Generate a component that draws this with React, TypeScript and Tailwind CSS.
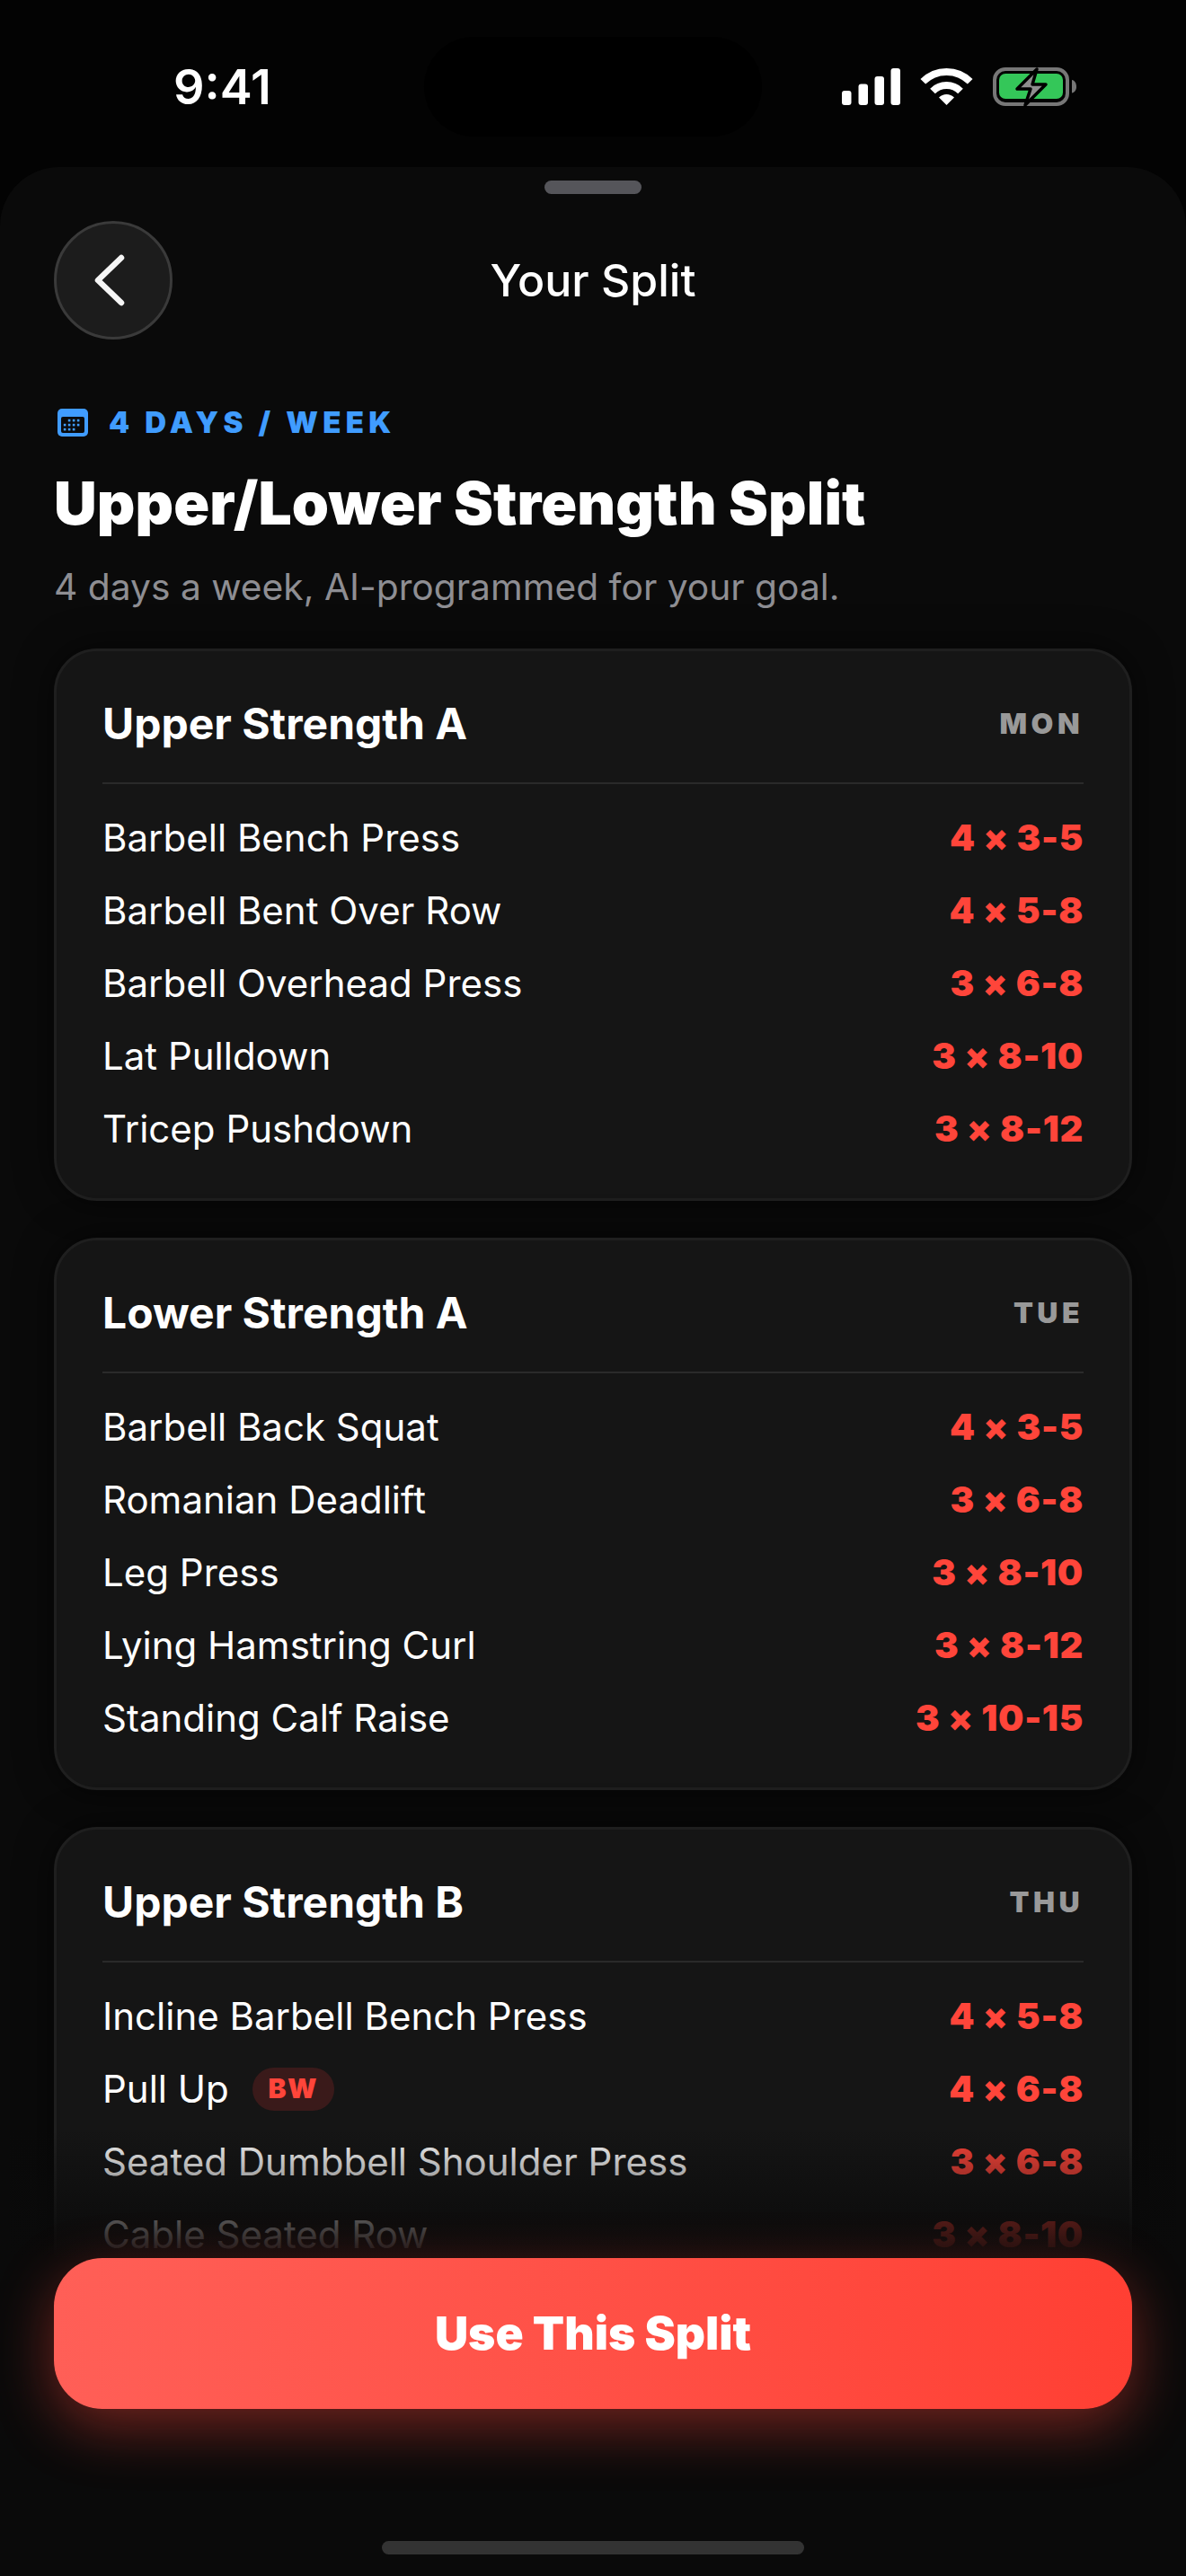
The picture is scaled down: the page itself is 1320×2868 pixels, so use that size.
type Exercise = { name: string; sets: string; tag?: string };
type Day = { title: string; day: string; exercises: Exercise[] };

const DAYS: Day[] = [
  {
    title: "Upper Strength A",
    day: "MON",
    exercises: [
      { name: "Barbell Bench Press", sets: "4 × 3-5" },
      { name: "Barbell Bent Over Row", sets: "4 × 5-8" },
      { name: "Barbell Overhead Press", sets: "3 × 6-8" },
      { name: "Lat Pulldown", sets: "3 × 8-10" },
      { name: "Tricep Pushdown", sets: "3 × 8-12" },
    ],
  },
  {
    title: "Lower Strength A",
    day: "TUE",
    exercises: [
      { name: "Barbell Back Squat", sets: "4 × 3-5" },
      { name: "Romanian Deadlift", sets: "3 × 6-8" },
      { name: "Leg Press", sets: "3 × 8-10" },
      { name: "Lying Hamstring Curl", sets: "3 × 8-12" },
      { name: "Standing Calf Raise", sets: "3 × 10-15" },
    ],
  },
  {
    title: "Upper Strength B",
    day: "THU",
    exercises: [
      { name: "Incline Barbell Bench Press", sets: "4 × 5-8" },
      { name: "Pull Up", sets: "4 × 6-8", tag: "BW" },
      { name: "Seated Dumbbell Shoulder Press", sets: "3 × 6-8" },
      { name: "Cable Seated Row", sets: "3 × 8-10" },
      { name: "Lateral Raise", sets: "3 × 12-15" },
    ],
  },
];

function StatusIcons() {
  return (
    <svg width="264" height="46" viewBox="0 0 264 46" fill="none">
      <rect x="1" y="26" width="10.5" height="16" rx="3" fill="#fff" />
      <rect x="19.5" y="18.5" width="10.5" height="23.5" rx="3" fill="#fff" />
      <rect x="37.5" y="10" width="10.5" height="32" rx="3" fill="#fff" />
      <rect x="55.5" y="1" width="10.5" height="41" rx="3" fill="#fff" />
      <path d="M91.3 15.8A37 37 0 0 1 143.700 15.800" stroke="#fff" strokeWidth="8" />
      <path d="M102 26.500A22 22 0 0 1 133 26.500" stroke="#fff" strokeWidth="8" />
      <path d="M117.500 42L109 33.500A12 12 0 0 1 126 33.500Z" fill="#fff" />
      <rect x="171" y="2" width="81" height="39" rx="12" stroke="#777" strokeWidth="4" />
      <rect x="176" y="7" width="71" height="28" rx="7" fill="#34c759" />
      <path d="M257 14c3 .5 5 3.500 5 7.500s-2 6.500-5 7z" fill="#777" />
      <path
        d="M218 2L196 24h15l-6 18L228 19h-15z"
        fill="#8e8e8e"
        stroke="#000"
        strokeWidth="3.500"
        strokeLinejoin="round"
      />
    </svg>
  );
}

function CalendarIcon() {
  return (
    <svg width="34" height="31" viewBox="0 0 34 31">
      <rect width="34" height="31" rx="5" fill="#409cff" />
      <rect x="4" y="9" width="26" height="18" rx="2" fill="#0a0a0a" />
      {[
        [13, 13],
        [18, 13],
        [23, 13],
        [8, 18],
        [13, 18],
        [18, 18],
        [23, 18],
        [8, 23],
        [13, 23],
        [18, 23],
      ].map(([x, y]) => (
        <rect key={`${x}-${y}`} x={x - 1.2} y={y - 1.2} width="2.600" height="2.600" fill="#409cff" />
      ))}
    </svg>
  );
}

function DayCard({ day }: { day: Day }) {
  return (
    <div className="shrink-0 rounded-[48px] border-[3px] border-[#1f1f1f] bg-[#151515] px-[51px] shadow-[0_0_40px_rgba(0,0,0,0.6)]">
      <div className="flex h-[148px] items-center justify-between border-b-2 border-[#2a2a2a] pt-[15px]">
        <span className="text-[48px] font-bold leading-none text-white">{day.title}</span>
        <span className="text-[32px] font-black leading-none tracking-[0.14em] text-[#999]">{day.day}</span>
      </div>
      <div className="flex flex-col pb-[37px] pt-[19px]">
        {day.exercises.map((ex) => (
          <div key={ex.name} className="flex h-[81px] items-center justify-between">
            <div className="flex items-center gap-[26px]">
              <span className="text-[42px] leading-none text-white">{ex.name}</span>
              {ex.tag && (
                <span className="flex h-[48px] w-[91px] items-center justify-center rounded-full bg-[#3a1a1a] text-[30px] font-black tracking-[0.05em] text-[#ff453a]">
                  {ex.tag}
                </span>
              )}
            </div>
            <span className="text-[40px] font-black leading-none tracking-[0.7px] text-[#ff453a]">{ex.sets}</span>
          </div>
        ))}
      </div>
    </div>
  );
}

export default function App() {
  return (
    <div className="relative flex h-[2868px] w-[1320px] flex-col overflow-hidden bg-[#030303] font-['Inter',sans-serif]">
      <div className="relative flex h-[186px] shrink-0 items-start justify-between pl-[193px] pr-[120px]">
        <span className="mt-[70px] text-[54px] font-semibold leading-none text-white">9:41</span>
        <div className="absolute left-[472px] top-[41px] h-[111px] w-[376px] rounded-[56px] bg-black" />
        <div className="mt-[75px]">
          <StatusIcons />
        </div>
      </div>

      <div className="flex min-h-0 flex-1 flex-col overflow-hidden rounded-t-[66px] bg-[#0a0a0a] px-[60px]">
        <div className="mx-auto mt-[15px] h-[15px] w-[108px] shrink-0 rounded-full bg-[#55555a]" />
        <div className="relative mt-[30px] flex h-[132px] shrink-0 items-center justify-center">
          <button className="absolute left-0 top-0 flex h-[132px] w-[132px] items-center justify-center rounded-full border-[3px] border-[#3a3a3a] bg-[#1c1c1c] pr-[9px]">
            <svg width="34" height="58" viewBox="0 0 34 58" fill="none">
              <path d="M30 4L4 29L30 54" stroke="#f5f5f5" strokeWidth="6.500" strokeLinecap="round" strokeLinejoin="round" />
            </svg>
          </button>
          <span className="text-[50px] font-medium leading-none text-white">Your Split</span>
        </div>
        <div className="ml-[4px] mt-[76px] flex shrink-0 items-center gap-[23px]">
          <CalendarIcon />
          <span className="text-[33px] font-black leading-none tracking-[0.16em] text-[#409cff]">4 DAYS / WEEK</span>
        </div>
        <h1 className="mt-[35px] shrink-0 text-[66px] font-black leading-[76px] tracking-[0.1px] text-white">
          Upper/Lower Strength Split
        </h1>
        <p className="mt-[30px] shrink-0 text-[40.750px] leading-[52px] text-[#8e8e93]">
          4 days a week, AI-programmed for your goal.
        </p>
        <div className="mt-[42px] flex flex-col gap-[41px]">
          {DAYS.map((d) => (
            <DayCard key={d.title} day={d} />
          ))}
        </div>
      </div>

      <div className="absolute inset-x-0 bottom-0 h-[498px] bg-gradient-to-b from-transparent from-0% via-[#0a0a0a] via-[29%] to-[#0a0a0a]" />

      <button className="absolute bottom-[186px] left-[60px] flex h-[168px] w-[1200px] items-center justify-center rounded-[54px] bg-gradient-to-r from-[#ff5f57] to-[#ff3f33] text-[51.500px] font-black text-white shadow-[0_20px_64px_rgba(255,69,58,0.42)]">
        Use This Split
      </button>

      <div className="absolute bottom-[24px] left-[425px] h-[15px] w-[470px] rounded-full bg-[#333]" />
    </div>
  );
}
